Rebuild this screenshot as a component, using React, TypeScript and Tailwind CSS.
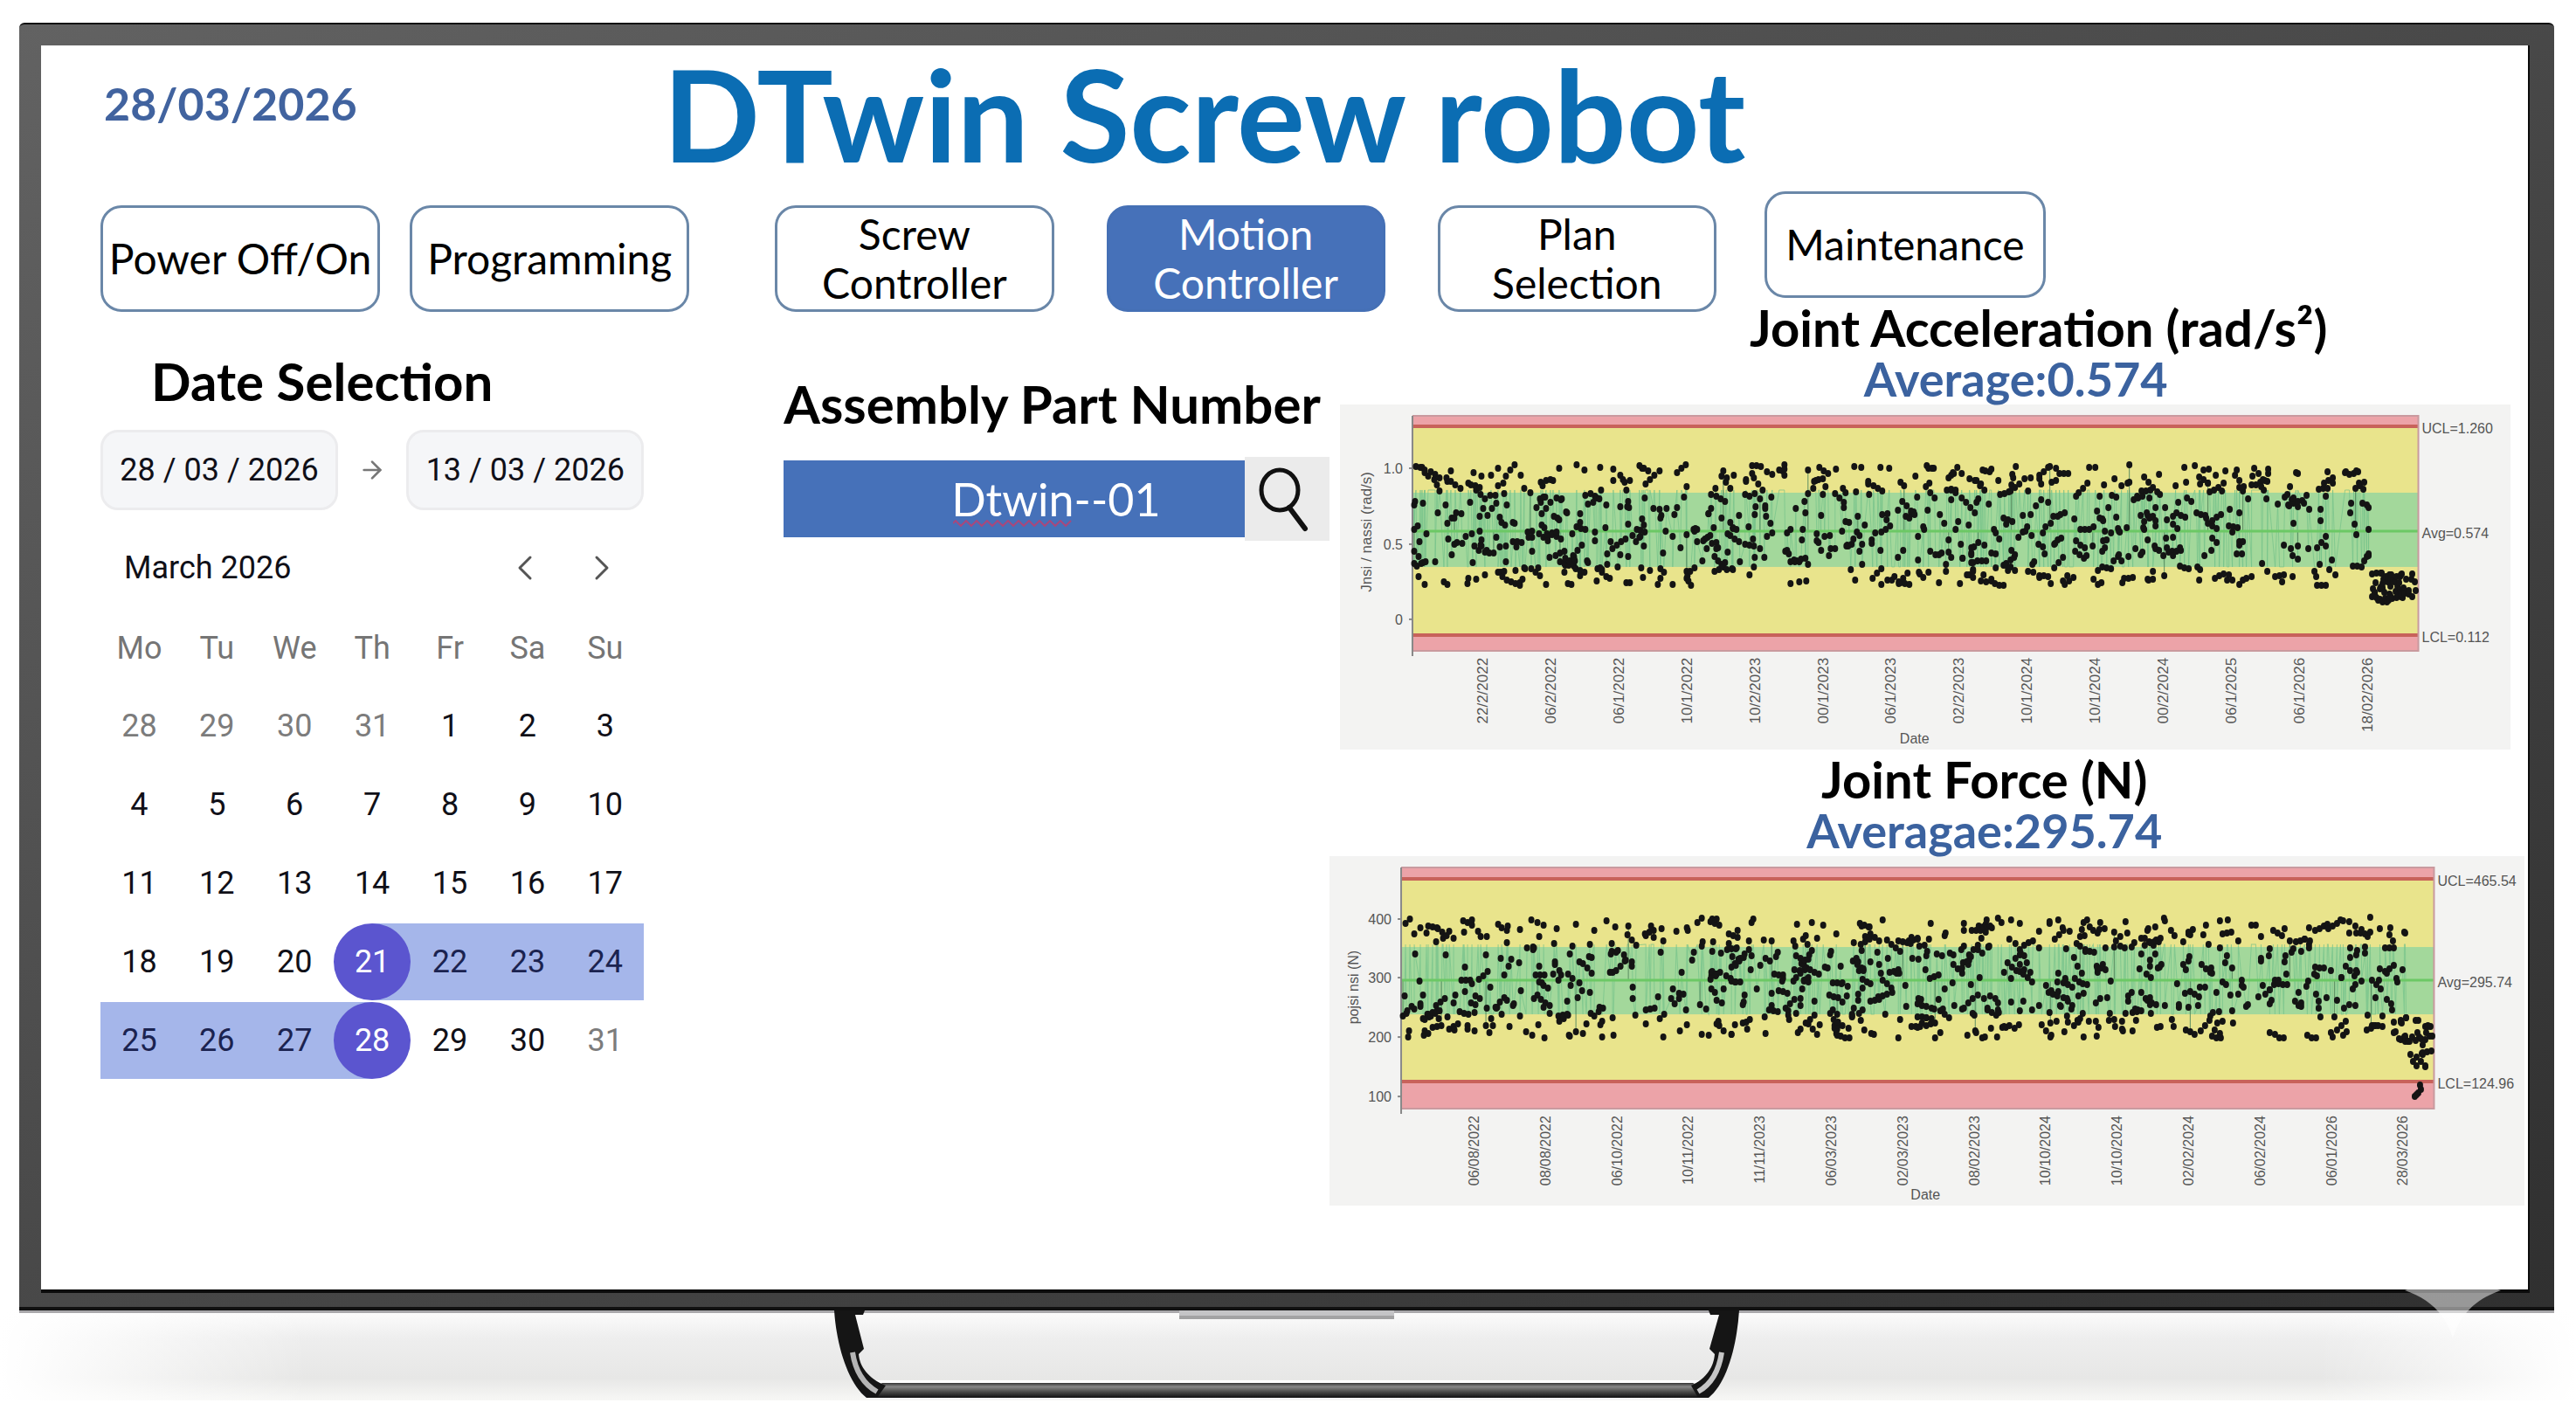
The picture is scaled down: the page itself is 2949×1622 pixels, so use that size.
import React, { useState } from 'react';
import clsx from 'clsx';
import { ArrowRight, ChevronLeft, ChevronRight } from 'lucide-react';

interface NavButtonProps {
  label: string;
  active: boolean;
  onClick: () => void;
}

function NavButton({ label, active, onClick }: NavButtonProps) {
  return (
    <button
      type="button"
      onClick={onClick}
      className={clsx(
        'flex h-[122px] min-w-0 flex-1 items-center justify-center rounded-3xl border-[3px] text-[48px] leading-[56px]',
        active ? 'border-[#4570b5] bg-[#4671b9] text-white' : 'border-[#6a87a8] bg-white text-black'
      )}
    >
      <span className="w-min min-w-0 whitespace-pre text-center">{label}</span>
    </button>
  );
}

const WEEKDAYS = ['Mo', 'Tu', 'We', 'Th', 'Fr', 'Sa', 'Su'];

interface Day {
  day: number;
  muted?: boolean;
  range?: 'start' | 'middle' | 'end';
}

const WEEKS: Day[][] = [
  [
    { day: 28, muted: true },
    { day: 29, muted: true },
    { day: 30, muted: true },
    { day: 31, muted: true },
    { day: 1 },
    { day: 2 },
    { day: 3 },
  ],
  [4, 5, 6, 7, 8, 9, 10].map((day) => ({ day })),
  [11, 12, 13, 14, 15, 16, 17].map((day) => ({ day })),
  [
    { day: 18 },
    { day: 19 },
    { day: 20 },
    { day: 21, range: 'start' },
    { day: 22, range: 'middle' },
    { day: 23, range: 'middle' },
    { day: 24, range: 'middle' },
  ],
  [
    { day: 25, range: 'middle' },
    { day: 26, range: 'middle' },
    { day: 27, range: 'middle' },
    { day: 28, range: 'end' },
    { day: 29 },
    { day: 30 },
    { day: 31, muted: true },
  ],
];

function DayCell({ day, muted, range }: Day) {
  const isEdge = range === 'start' || range === 'end';

  return (
    <td className="h-[90px] p-0">
      <div
        className={clsx(
          'flex h-[88px] items-center justify-center',
          range === 'middle' && 'bg-[#a5b6ea]',
          range === 'start' && 'bg-linear-to-r from-transparent from-50% to-[#a5b6ea] to-50%',
          range === 'end' && 'bg-linear-to-r from-[#a5b6ea] from-50% to-transparent to-50%'
        )}
      >
        <button
          type="button"
          className={clsx(
            'size-[88px] rounded-full',
            isEdge && 'bg-[#5b55cf] text-white',
            range === 'middle' && 'text-[#1b2350]',
            muted && 'text-[#7c7c7c]'
          )}
        >
          {day}
        </button>
      </div>
    </td>
  );
}

function Calendar() {
  return (
    <div className="font-[Roboto,sans-serif] text-[36px] leading-[44px] text-[#101018]">
      <div className="mt-7 flex items-center justify-between">
        <input
          aria-label="Start date"
          defaultValue="28 / 03 / 2026"
          className="h-[92px] w-[272px] rounded-[20px] border-[3px] border-[#ececee] bg-[#f5f6f8] text-center"
        />
        <ArrowRight className="size-8 text-[#777]" />
        <input
          aria-label="End date"
          defaultValue="13 / 03 / 2026"
          className="h-[92px] w-[272px] rounded-[20px] border-[3px] border-[#ececee] bg-[#f5f6f8] text-center"
        />
      </div>
      <div className="mt-[42px] flex items-center justify-between pl-[27px] pr-6">
        <span>March 2026</span>
        <div className="flex gap-10 text-[#555]">
          <button type="button" aria-label="Previous month">
            <ChevronLeft className="size-12" strokeWidth={1.5} />
          </button>
          <button type="button" aria-label="Next month">
            <ChevronRight className="size-12" strokeWidth={1.5} />
          </button>
        </div>
      </div>
      <table className="mt-6 w-full table-fixed border-collapse">
        <thead>
          <tr>
            {WEEKDAYS.map((name) => (
              <th key={name} scope="col" className="h-[88px] p-0 font-normal text-[#757575]">
                {name}
              </th>
            ))}
          </tr>
        </thead>
        <tbody>
          {WEEKS.map((week, i) => (
            <tr key={i}>
              {week.map((cell) => (
                <DayCell key={cell.day} {...cell} />
              ))}
            </tr>
          ))}
        </tbody>
      </table>
    </div>
  );
}

function PartSearch() {
  return (
    <section className="pt-[77px]">
      <h2 className="whitespace-nowrap text-[60px] font-bold leading-[56px]">
        <label htmlFor="part-number">Assembly Part Number</label>
      </h2>
      <div className="mt-[33px] flex items-center">
        <div className="relative h-[88px] min-w-0 flex-1">
          <input
            id="part-number"
            defaultValue="Dtwin--01"
            className="size-full bg-[#4671b9] pl-[96px] text-center text-[52px] text-white"
          />
          <svg className="absolute bottom-3 left-[194px] h-2 w-[138px]" viewBox="0 0 138 8">
            <path
              d={`M0 4 ${Array.from({ length: 23 }, (_, i) => `L${i * 6 + 3} ${i % 2 ? 7 : 1}`).join(' ')}`}
              fill="none"
              stroke="#a8487c"
              strokeWidth="2"
            />
          </svg>
        </div>
        <button type="button" aria-label="Search" className="h-24 w-[97px] bg-[#ebebeb]">
          <svg viewBox="0 0 97 96" className="size-full" fill="none" stroke="#111">
            <ellipse cx="40" cy="38" rx="21" ry="23" strokeWidth="5" />
            <path d="M51 58 L69 82" strokeWidth="6" strokeLinecap="round" />
          </svg>
        </button>
      </div>
    </section>
  );
}

type Point = [number, number];

// Seeded generator (mulberry32), so the samples stay the same between renders
function createRandom(seed: number) {
  let a = seed;
  return () => {
    a = (a + 0x6d2b79f5) | 0;
    let t = Math.imul(a ^ (a >>> 15), 1 | a);
    t = (t + Math.imul(t ^ (t >>> 7), 61 | t)) ^ t;
    return ((t ^ (t >>> 14)) >>> 0) / 4294967296;
  };
}

function createSamples(seed: number, count: number, x0: number, x1: number, y0: number, y1: number): Point[] {
  const random = createRandom(seed);
  const points: Point[] = [];
  while (points.length < count) {
    const x = x0 + random() * (x1 - x0);
    const y = y0 + random() * (y1 - y0);
    const run = random() < 0.15 ? 3 : 1;
    const slope = (random() - 0.5) * 14;
    for (let i = 0; i < run; i++) {
      points.push([
        Math.round(Math.min(x1, x + i * 5)),
        Math.round(Math.max(y0, Math.min(y1, y + i * slope))),
      ]);
    }
  }
  return points.sort((a, b) => a[0] - b[0]);
}

interface ControlChartProps {
  title: string;
  width: number;
  height: number;
  plot: { left: number; right: number; top: number; bottom: number };
  upper: number;
  lower: number;
  green: [number, number];
  average: number;
  limits: string[];
  ticks: { label: string; y: number }[];
  dates: string[];
  dateStart: number;
  dateStep: number;
  dateSize: number;
  dateX: number;
  axisLabel: string;
  axisX: number;
  axisY: number;
  axisSize: number;
  samples: Point[];
  tail: Point[];
}

function ControlChart(props: ControlChartProps) {
  const { plot, upper, lower, green, average, samples, tail } = props;
  const w = plot.right - plot.left;

  return (
    <svg
      role="img"
      aria-label={props.title}
      viewBox={`0 0 ${props.width} ${props.height}`}
      className="block h-auto w-full bg-[#f3f3f2] font-['Liberation_Sans',sans-serif]"
    >
      <rect x={plot.left} y={plot.top} width={w} height={plot.bottom - plot.top} fill="#eca3a8" />
      <rect x={plot.left} y={upper} width={w} height={lower - upper} fill="#e9e48c" />
      <rect x={plot.left} y={green[0]} width={w} height={green[1] - green[0]} fill="#a3d89b" />
      <path
        d={`M${samples.map(([x, y]) => `${x} ${Math.max(green[0] - 3, Math.min(green[1], y))}`).join(' L')}`}
        fill="none"
        stroke="#74c28a"
        strokeWidth="1"
        opacity="0.7"
      />
      {samples
        .filter((_, i) => i % 41 === 0)
        .map(([x, y], i) => (
          <path key={i} d={`M${x} ${y} V${average}`} stroke="#5d8f62" strokeWidth="1" />
        ))}
      <path d={`M${plot.left} ${average} H${plot.right}`} stroke="#6cc865" strokeWidth="3" />
      <path d={`M${plot.left} ${upper} H${plot.right} M${plot.left} ${lower} H${plot.right}`} stroke="#c8625a" strokeWidth="4" />
      <path d={`M${plot.left} ${plot.top} H${plot.right} V${plot.bottom} H${plot.left}`} fill="none" stroke="#c99a9f" strokeWidth="2" />
      <path d={`M${plot.left} ${plot.top} V${plot.bottom + 6}`} stroke="#888" strokeWidth="2" />
      <g fill="#141414">
        {[...samples, ...tail].map(([x, y], i) => (
          <ellipse key={i} cx={x} cy={y} rx="3.5" ry="4" />
        ))}
      </g>
      <g fill="#555" fontSize="16">
        {props.ticks.map(({ label, y }) => (
          <React.Fragment key={label}>
            <text x={plot.left - 11} y={y + 6} textAnchor="end">
              {label}
            </text>
            <path d={`M${plot.left - 4} ${y} h4`} stroke="#888" strokeWidth="2" />
          </React.Fragment>
        ))}
        {[upper, average, lower].map((y, i) => (
          <text key={y} x={plot.right + 4} y={y + 8}>
            {props.limits[i]}
          </text>
        ))}
        {props.dates.map((date, i) => (
          <text
            key={i}
            fontSize={props.dateSize}
            textAnchor="end"
            transform={`translate(${props.dateStart + Math.round(i * props.dateStep) + 6} ${plot.bottom + 8}) rotate(-90)`}
          >
            {date}
          </text>
        ))}
        <text x={props.dateX} y={props.height - 7} textAnchor="middle">
          Date
        </text>
        <text
          fontSize={props.axisSize}
          textAnchor="middle"
          transform={`translate(${props.axisX} ${props.axisY}) rotate(-90)`}
        >
          {props.axisLabel}
        </text>
      </g>
    </svg>
  );
}

const ACCELERATION: ControlChartProps = {
  title: 'Joint Acceleration',
  width: 1341,
  height: 395,
  plot: { left: 83, right: 1235, top: 13, bottom: 282 },
  upper: 25,
  lower: 264,
  green: [101, 186],
  average: 145,
  limits: ['UCL=1.260', 'Avg=0.574', 'LCL=0.112'],
  ticks: [
    { label: '1.0', y: 73 },
    { label: '0.5', y: 160 },
    { label: '0', y: 246 },
  ],
  dates: [
    '22/2/2022', '06/2/2022', '06/1/2022', '10/1/2022', '10/2/2023', '00/1/2023', '06/1/2023',
    '02/2/2023', '10/1/2024', '10/1/2024', '00/2/2024', '06/1/2025', '06/1/2026', '18/02/2026',
  ],
  dateStart: 163,
  dateStep: 77.9,
  dateSize: 17,
  dateX: 658,
  axisLabel: 'Jnsi / nassi (rad/s)',
  axisX: 36,
  axisY: 146,
  axisSize: 17,
  samples: createSamples(7, 960, 84, 1178, 69, 207),
  tail: createSamples(21, 62, 1180, 1233, 193, 226),
};

const FORCE: ControlChartProps = {
  title: 'Joint Force',
  width: 1368,
  height: 400,
  plot: { left: 82, right: 1264, top: 13, bottom: 289 },
  upper: 26,
  lower: 258,
  green: [104, 181],
  average: 142,
  limits: ['UCL=465.54', 'Avg=295.74', 'LCL=124.96'],
  ticks: [
    { label: '400', y: 72 },
    { label: '300', y: 139 },
    { label: '200', y: 207 },
    { label: '100', y: 275 },
  ],
  dates: [
    '06/08/2022', '08/08/2022', '06/10/2022', '10/11/2022', '11/11/2023', '06/03/2023', '02/03/2023',
    '08/02/2023', '10/10/2024', '10/10/2024', '02/02/2024', '06/02/2024', '06/01/2026', '28/03/2026',
  ],
  dateStart: 165,
  dateStep: 81.8,
  dateSize: 16,
  dateX: 682,
  axisLabel: 'pojsi nsi (N)',
  axisX: 33,
  axisY: 150,
  axisSize: 16,
  samples: createSamples(99, 1020, 83, 1234, 70, 208),
  tail: [
    ...createSamples(5, 22, 1214, 1262, 188, 212),
    ...createSamples(8, 16, 1236, 1262, 206, 252),
    [1248, 262],
    [1249, 267],
    [1246, 271],
    [1242, 275],
    [1244, 273],
  ],
};

const HEADING = 'whitespace-nowrap text-center font-bold leading-[59px]';

function Charts() {
  return (
    <section className="-mt-3 min-w-0">
      <h2 className={clsx(HEADING, 'pl-[256px] text-[58px]')}>Joint Acceleration (rad/s²)</h2>
      <p className={clsx(HEADING, 'pl-[204px] text-[54px] text-[#3b629f]')}>Average:0.574</p>
      <div className="ml-3 mr-4">
        <ControlChart {...ACCELERATION} />
      </div>
      <h2 className={clsx(HEADING, 'mt-1 pl-[132px] text-[58px]')}>Joint Force (N)</h2>
      <p className={clsx(HEADING, 'pl-[132px] text-[54px] text-[#3b629f]')}>Averagae:295.74</p>
      <ControlChart {...FORCE} />
    </section>
  );
}

function Stand() {
  return (
    <svg viewBox="0 0 2949 104" className="block h-auto w-full" aria-hidden="true">
      <defs>
        <linearGradient id="floor" x1="0" y1="0" x2="0" y2="1">
          <stop offset="0" stopColor="#fdfdfd" />
          <stop offset="0.3" stopColor="#eeeeee" />
          <stop offset="0.75" stopColor="#e7e7e6" />
          <stop offset="1" stopColor="#f7f7f5" />
        </linearGradient>
        <linearGradient id="fade" x1="0" y1="0" x2="1" y2="0">
          <stop offset="0" stopColor="#fff" />
          <stop offset="0.12" stopColor="#fff" stopOpacity="0" />
          <stop offset="0.9" stopColor="#fff" stopOpacity="0" />
          <stop offset="1" stopColor="#fff" />
        </linearGradient>
        <linearGradient id="bar" x1="0" y1="0" x2="0" y2="1">
          <stop offset="0" stopColor="#333" />
          <stop offset="0.25" stopColor="#888" />
          <stop offset="0.6" stopColor="#4a4a48" />
          <stop offset="1" stopColor="#111" />
        </linearGradient>
      </defs>
      <rect width="2949" height="103" fill="url(#floor)" />
      <rect width="2949" height="103" fill="url(#fade)" />
      <rect x="22" width="2902" height="3" fill="#a9a8ab" />
      <path d="M1350 0 H1596 V10 H1350 Z" fill="#c4c4c6" />
      <path d="M1350 6 H1596 V10 H1350 Z" fill="#a2a2a3" />
      <path d="M1000 80 H1945 V83 H1000 Z" fill="#fff" />
      <path d="M1010 83 H1938 L1956 94 L1950 100 H1000 L992 94 Z" fill="url(#bar)" />
      <path d="M955 0 H990 L988 5 H979 L989 44 L983 50 C984 64 994 78 1014 86 L1004 100 H992 C972 84 958 44 955 0 Z" fill="#151515" />
      <path d="M976 48 C979 68 988 84 1004 93" fill="none" stroke="#b5b5b5" strokeWidth="6" />
      <path d="M1991 0 H1956 L1958 5 H1968 L1957 44 L1963 50 C1962 64 1954 78 1936 86 L1944 100 H1956 C1976 84 1988 44 1991 0 Z" fill="#151515" />
      <path d="M1971 48 C1968 68 1960 84 1944 93" fill="none" stroke="#c5c5c5" strokeWidth="6" />
    </svg>
  );
}

export default function App() {
  const [active, setActive] = useState('Motion\nController');

  const renderNav = (label: string) => (
    <NavButton key={label} label={label} active={active === label} onClick={() => setActive(label)} />
  );

  return (
    <div className="min-h-screen bg-white pt-[26px] font-[Lato,sans-serif] text-black">
      <div className="relative ml-[22px] mr-[25px] rounded-t-md border-b-4 border-t-2 border-[#111] bg-linear-to-br from-[#626262] to-[#303030] pb-4 pl-[25px] pr-7 pt-6">
        <main className="border-b-4 border-r-2 border-[#0c0c0c] bg-white pb-24 pl-[68px] pr-1">
          <header className="flex pt-1.5">
            <time dateTime="2026-03-28" className="w-[644px] shrink-0 pl-1 pt-8 text-[52px] font-bold leading-[56px] text-[#41639f]">
              28/03/2026
            </time>
            <h1 className="whitespace-nowrap text-[146px] font-bold leading-[144px] text-[#0b6db3]">
              DTwin Screw robot
            </h1>
          </header>

          <nav className="mt-[17px] flex items-end pr-[548px]">
            <div className="mr-[98px] flex flex-[674] gap-[34px]">
              {['Power Off/On', 'Programming'].map(renderNav)}
            </div>
            <div className="mr-[55px] flex flex-[1077] gap-[60px]">
              {['Screw\nController', 'Motion\nController', 'Plan\nSelection'].map(renderNav)}
            </div>
            <div className="mb-4 flex flex-[322]">{renderNav('Maintenance')}</div>
          </nav>

          <div className="grid grid-cols-[782fr_624fr_1368fr]">
            <section className="pr-40 pt-[51px]">
              <h2 className="pl-[58px] text-[60px] font-bold leading-[56px]">Date Selection</h2>
              <Calendar />
            </section>
            <PartSearch />
            <Charts />
          </div>
        </main>
        <svg viewBox="0 0 110 110" className="absolute -bottom-9 right-[61px] size-[110px]" aria-hidden="true">
          <path d="M55 0 C63 30 80 47 110 55 C84 64 64 80 55 110 C46 80 26 64 0 55 C30 47 47 30 55 0 Z" fill="#fff" opacity="0.5" />
        </svg>
      </div>
      <Stand />
    </div>
  );
}
